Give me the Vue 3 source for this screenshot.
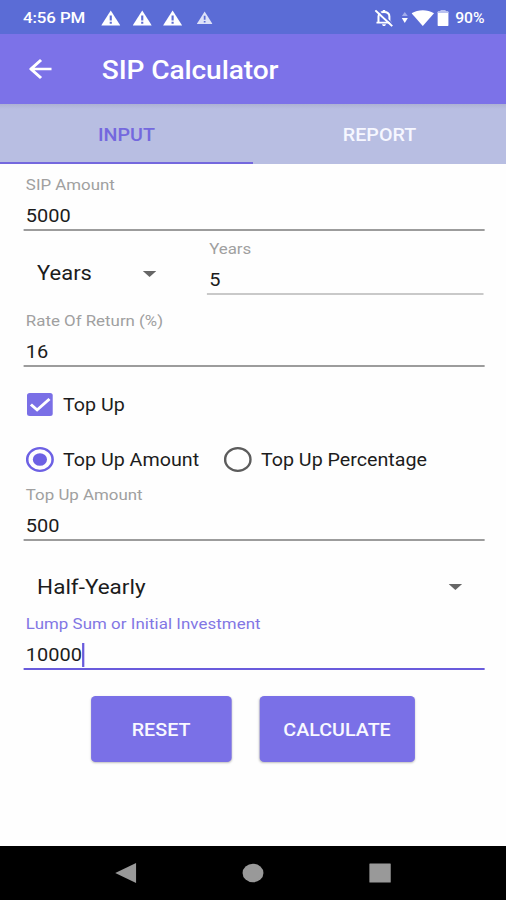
<script setup>
import { ref } from 'vue'

const sip = ref('5000')
const years = ref('5')
const rate = ref('16')
const topUp = ref('500')
const lumpSum = ref('10000')
</script>

<template>
  <div class="viewport">
    <div class="screen">
      <header class="status">
        <span class="time">4:56 PM</span>
        <svg v-for="n in 3" :key="n" class="warn" viewBox="0 0 17 16">
          <path d="M8.5 0.5 17 15.5H0Z" fill="#fff" />
          <path d="M8.5 5.5v5M8.5 11.8v2" stroke="#5b6cd6" stroke-width="1.9" />
        </svg>
        <svg class="warn small" viewBox="0 0 17 16">
          <path d="M8.5 0.5 17 15.5H0Z" fill="#dde1f8" />
          <path d="M8.5 5.5v5M8.5 11.8v2" stroke="#5b6cd6" stroke-width="1.9" />
        </svg>
        <span class="spacer"></span>
        <svg class="bell" viewBox="0 0 17 18">
          <path d="M3.6 13.3V7.6C3.6 4.8 5.6 3 8.5 3s4.8 1.8 4.8 4.6v5.7M1.8 13.6h13.4" fill="none" stroke="#fff" stroke-width="1.8" />
          <path d="M7.4 1h2.2v2H7.4zM6.8 15.2h3.4c0 1.1-.7 1.8-1.7 1.8s-1.7-.7-1.7-1.8z" fill="#fff" />
          <path d="M2.2.6 17 16.1" stroke="#5b6cd6" stroke-width="1.4" />
          <path d="M.8 1.4 15.8 17.2" stroke="#fff" stroke-width="1.8" />
        </svg>
        <svg class="traffic" viewBox="0 0 6 14">
          <path d="M3 1 5.6 5H.4Z" fill="#a3acea" />
          <path d="M3 12 .3 7h5.4Z" fill="#fff" />
        </svg>
        <svg class="wifi" viewBox="0 0 20 16">
          <path d="M0 3.2C6-.9 14-.9 20 3.2L10 16Z" fill="#fff" />
        </svg>
        <svg class="battery" viewBox="0 0 10 16">
          <path d="M3 0h4v1.5h2c.6 0 1 .4 1 1V15c0 .6-.4 1-1 1H1c-.6 0-1-.4-1-1V2.5c0-.6.4-1 1-1h2z" fill="#fff" />
          <path d="M0 2.5c0-.6.4-1 1-1h2V0h4v1.5h2c.6 0 1 .4 1 1V3H0z" fill="#b9c1f0" />
        </svg>
        <span class="percent">90%</span>
      </header>

      <div class="appbar">
        <svg class="back" viewBox="0 0 20 20">
          <path d="M20 10H2M10.500 1 1.500 10l9 9" fill="none" stroke="#fff" stroke-width="2.600" />
        </svg>
        <h1>SIP Calculator</h1>
      </div>

      <nav class="tabs">
        <div class="tab active"><span>INPUT</span></div>
        <div class="tab"><span>REPORT</span></div>
      </nav>

      <main class="form">
        <div class="field">
          <div class="label">SIP Amount</div>
          <div class="value">{{ sip }}</div>
        </div>

        <div class="duration">
          <div class="select">
            <span>Years</span>
            <svg class="caret" viewBox="0 0 12 6"><path d="M0 0h12L6 6Z" fill="#666" /></svg>
          </div>
          <div class="field light">
            <div class="label">Years</div>
            <div class="value">{{ years }}</div>
          </div>
        </div>

        <div class="field rate">
          <div class="label">Rate Of Return (%)</div>
          <div class="value">{{ rate }}</div>
        </div>

        <div class="option check-row">
          <svg class="checkbox" viewBox="0 0 23 23">
            <rect width="23" height="23" rx="2.500" fill="#7a6fe6" />
            <path d="M3.500 11.500 9 17 20 6" fill="none" stroke="#fff" stroke-width="2.600" />
          </svg>
          <span>Top Up</span>
        </div>

        <div class="radios">
          <div class="option">
            <svg class="radio" viewBox="0 0 25 25">
              <circle cx="12.500" cy="12.500" r="11.300" fill="none" stroke="#6d61e4" stroke-width="2.300" />
              <circle cx="12.500" cy="12.500" r="6.300" fill="#6d61e4" />
            </svg>
            <span>Top Up Amount</span>
          </div>
          <div class="option">
            <svg class="radio" viewBox="0 0 25 25">
              <circle cx="12.500" cy="12.500" r="11.300" fill="none" stroke="#5c5c5c" stroke-width="2.200" />
            </svg>
            <span>Top Up Percentage</span>
          </div>
        </div>

        <div class="field">
          <div class="label">Top Up Amount</div>
          <div class="value">{{ topUp }}</div>
        </div>

        <div class="select frequency">
          <span>Half-Yearly</span>
          <svg class="caret" viewBox="0 0 12 6"><path d="M0 0h12L6 6Z" fill="#666" /></svg>
        </div>

        <div class="field focused">
          <div class="label">Lump Sum or Initial Investment</div>
          <div class="value">{{ lumpSum }}<i class="cursor"></i></div>
        </div>

        <div class="actions">
          <button class="reset">RESET</button>
          <button class="calculate">CALCULATE</button>
        </div>
      </main>

      <footer class="navbar">
        <svg viewBox="0 0 20 20"><path d="M.5 10 19 0v20Z" fill="#999" /></svg>
        <svg viewBox="0 0 20 20"><circle cx="10" cy="10" r="9.300" fill="#999" /></svg>
        <svg viewBox="0 0 20 20"><rect x=".5" y=".5" width="19" height="19" rx=".5" fill="#999" /></svg>
      </footer>
    </div>
  </div>
</template>

<style>
body {
  margin: 0;
  background: #fff;
}
</style>

<style scoped>
.viewport {
  width: 506px;
  height: 900px;
  overflow: hidden;
}
.screen {
  width: 450px;
  height: 900px;
  display: flex;
  flex-direction: column;
  background: #fefefe;
  font-family: Roboto, "Liberation Sans", sans-serif;
  color: #1c1c1c;
  transform: scaleX(1.12444);
  transform-origin: 0 0;
}
svg {
  display: block;
  flex: none;
}
.status {
  height: 34px;
  display: flex;
  align-items: center;
  box-sizing: border-box;
  padding: 2px 19px 0 20.5px;
  background: #5b6cd6;
  color: #fff;
  font-size: 15px;
  font-weight: 500;
}
.time {
  width: 69.5px;
  white-space: nowrap;
  letter-spacing: -0.1px;
}
.warn {
  width: 17px;
  height: 16px;
  margin-right: 10.5px;
}
.warn.small {
  width: 14px;
  height: 13.5px;
  margin: 0 0 0 2px;
}
.spacer {
  flex: 1;
}
.bell {
  width: 17px;
  height: 18px;
}
.traffic {
  width: 6px;
  height: 14px;
  margin-left: 7px;
}
.wifi {
  width: 20px;
  height: 16px;
  margin-left: 2.5px;
}
.battery {
  width: 10px;
  height: 16px;
  margin: 0 6px 0 3px;
}
.percent {
  font-size: 14px;
}
.appbar {
  height: 70px;
  display: flex;
  align-items: center;
  background: #7c72e8;
  color: #fff;
}
.back {
  width: 20px;
  height: 20px;
  margin-left: 25.5px;
}
h1 {
  margin: 3px 0 0 45px;
  font-size: 25px;
  font-weight: 500;
  letter-spacing: -0.1px;
}
.tabs {
  height: 60px;
  display: flex;
  background: linear-gradient(#adb2d3, #b8bee2 5px);
}
.tab {
  flex: 1;
  display: flex;
  align-items: center;
  justify-content: center;
  box-sizing: border-box;
  padding-top: 3px;
  border-bottom: 2px solid transparent;
  color: #f6f7ff;
  font-size: 17.5px;
  font-weight: 500;
}
.tab.active {
  color: #7468de;
  border-bottom-color: #7468de;
}
.form {
  flex: 1;
  padding: 12px 19.5px 0 20.5px;
}
.field {
  width: 410px;
  height: 55px;
  box-sizing: border-box;
  border-bottom: 2px solid #9c9c9c;
}
.label {
  height: 18px;
  line-height: 18px;
  padding-left: 2.5px;
  font-size: 15px;
  color: #a0a0a0;
  white-space: nowrap;
}
.value {
  display: flex;
  align-items: center;
  height: 28px;
  margin-top: 8px;
  padding-left: 2.5px;
  font-size: 17.75px;
}
.duration {
  display: flex;
  width: 409.5px;
  margin-top: 9px;
}
.duration .field {
  width: 246.5px;
}
.light {
  border-bottom-color: #c9c9c9;
}
.select {
  flex: 1;
  display: flex;
  align-items: center;
  justify-content: space-between;
  padding: 12px 44.5px 0 12.5px;
  font-size: 20px;
}
.duration .select {
  font-size: 19.5px;
}
.caret {
  width: 12px;
  height: 6px;
}
.rate {
  margin-top: 16.5px;
}
.option {
  display: flex;
  align-items: center;
  height: 28px;
  font-size: 17.5px;
  white-space: nowrap;
}
.option span {
  padding-top: 1px;
}
.check-row {
  margin-top: 23.5px;
  padding-left: 3.500px;
  gap: 9px;
}
.checkbox {
  width: 23px;
  height: 23px;
}
.radios {
  display: flex;
  margin-top: 27px;
  padding-left: 2.500px;
  gap: 22px;
}
.radios .option {
  gap: 8px;
}
.radio {
  width: 25px;
  height: 25px;
}
.radios + .field {
  margin-top: 13px;
}
.frequency {
  height: 30px;
  padding: 0 19.500px 0 12.500px;
  margin-top: 31px;
}
.frequency + .field {
  margin-top: 13px;
}
.focused {
  border-bottom-color: #695bdc;
}
.focused .label {
  color: #8276e4;
  letter-spacing: 0.05px;
}
.cursor {
  width: 2.500px;
  height: 24px;
  background: #695bdc;
}
.actions {
  display: flex;
  gap: 25px;
  margin: 26px 0 0 60.500px;
}
button {
  height: 66px;
  padding: 2px 0 0;
  border: 0;
  border-radius: 4px;
  background: #7a70e7;
  box-shadow: 0 1px 2px rgba(0, 0, 0, 0.25);
  color: #f8f8ff;
  font-family: inherit;
  font-size: 17.500px;
  font-weight: 500;
}
.reset {
  width: 124.500px;
}
.calculate {
  width: 138.500px;
}
.navbar {
  height: 54px;
  display: flex;
  align-items: center;
  justify-content: space-between;
  box-sizing: border-box;
  padding: 0 102px;
  background: #000;
}
.navbar svg {
  width: 20px;
  height: 20px;
}
</style>
